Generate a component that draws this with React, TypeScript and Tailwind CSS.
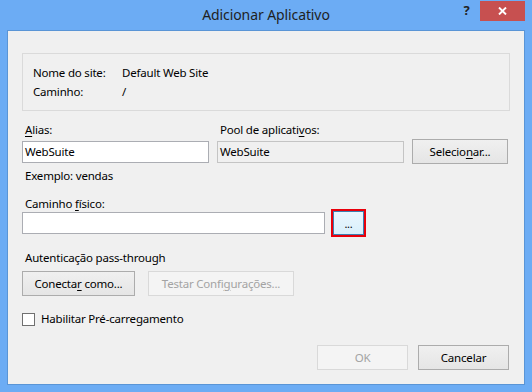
import type { ReactNode } from 'react';

function Key({ children }: { children: ReactNode }) {
  return <span className="underline underline-offset-[2px] decoration-1">{children}</span>;
}

function Button({
  children,
  className = '',
  disabled = false
}: {
  children: ReactNode;
  className?: string;
  disabled?: boolean;
}) {
  return (
    <button
      type="button"
      className={
        'h-[25px] flex items-center justify-center border ' +
        (disabled
          ? 'border-[#d9d9d9] bg-[#f4f4f4] text-[#a3a3a3] '
          : 'border-[#acacac] bg-linear-to-b from-[#f0f0f0] to-[#e5e5e5] text-black ') +
        className
      }
    >
      <span>{children}</span>
    </button>
  );
}

function TextBox({ value = '', className = '', readOnly = false }: { value?: string; className?: string; readOnly?: boolean }) {
  return (
    <div
      className={
        'h-[22px] border flex items-center pl-[2px] ' +
        (readOnly ? 'bg-[#f0f0f0] border-[#c4c4c4] ' : 'bg-white border-[#abadb3] ') +
        className
      }
    >
      {value}
    </div>
  );
}

export default function App() {
  return (
    <div className="w-[532px] h-[392px] bg-[#6cacf4] flex flex-col px-[7px] pb-[7px] font-['Noto_Sans',sans-serif] text-[11.5px] tracking-[-0.2px] text-black select-none">
      {/* title bar */}
      <div className="h-[30px] -mx-[7px] grid grid-cols-[1fr_auto_1fr]">
        <div />
        <div className="pt-[5px] text-[14px] tracking-[-0.1px] text-[#1f1f1f] leading-[20px]">Adicionar Aplicativo</div>
        <div className="flex justify-end items-start pr-[7px]">
          <div className="w-[27px] h-[21px] flex items-center justify-center text-[13px] font-bold text-[#222]">?</div>
          <div className="w-[45px] h-[20px] mt-[1px] bg-[#c75050] flex items-center justify-center">
            <svg width="9" height="8" viewBox="0 0 9 8">
              <path d="M1 0.5 L8 7.5 M8 0.5 L1 7.5" stroke="white" strokeWidth="1.9" />
            </svg>
          </div>
        </div>
      </div>

      {/* client area */}
      <div className="flex-1 bg-[#f0f0f0] border border-[#5a95d6] flex flex-col px-[14px] pt-[22px] pb-[14px] leading-[16px]">
        <div className="border border-[#dadada] pl-[10px] pt-[9px] pb-[9px]">
          <div className="flex h-[19px] items-center">
            <span className="w-[89px]">Nome do site:</span>
            <span>Default Web Site</span>
          </div>
          <div className="flex h-[19px] items-center">
            <span className="w-[89px]">Caminho:</span>
            <span>/</span>
          </div>
        </div>

        <div className="flex mt-[11px] gap-[8px]">
          <div className="flex flex-col w-[187px]">
            <span className="pl-[3px]">
              <Key>A</Key>lias:
            </span>
            <TextBox value="WebSuite" className="mt-[3px]" />
          </div>
          <div className="flex flex-col w-[187px]">
            <span className="pl-[3px]">
              Pool de aplicati<Key>v</Key>os:
            </span>
            <TextBox value="WebSuite" readOnly className="mt-[3px]" />
          </div>
          <Button className="self-end w-[96px] -mb-[1px]">
            Selecio<Key>n</Key>ar...
          </Button>
        </div>

        <span className="pl-[3px] mt-[5px]">Exemplo: vendas</span>

        <span className="pl-[3px] mt-[12px]">
          Caminho <Key>f</Key>ísico:
        </span>
        <div className="flex items-center gap-[6px] -mt-[3px] h-[28px]">
          <TextBox className="w-[303px]" />
          <div className="w-[35px] h-[28px] border-2 border-[#e8000b] flex">
            <div className="flex-1 border border-[#3c7fb1] bg-linear-to-b from-[#eaf6fd] to-[#d9f0fc] flex items-end justify-center pb-[5px] text-[11px] leading-[10px]">
              ...
            </div>
          </div>
        </div>

        <span className="pl-[3px] mt-[13px]">Autenticação pass-through</span>
        <div className="flex gap-[13px] mt-[5px]">
          <Button className="w-[113px]">
            Conecta<Key>r</Key> como...
          </Button>
          <Button disabled className="w-[146px]">
            Testar Confi<Key>g</Key>urações...
          </Button>
        </div>

        <label className="flex items-center mt-[15px] h-[16px]">
          <span className="w-[13px] h-[13px] border border-[#707070] bg-white" />
          <span className="ml-[6px]">Habilitar Pré-carregamento</span>
        </label>

        <div className="mt-auto flex justify-end gap-[10px] pr-[1px]">
          <Button disabled className="w-[91px]">
            OK
          </Button>
          <Button className="w-[91px]">Cancelar</Button>
        </div>
      </div>
    </div>
  );
}
